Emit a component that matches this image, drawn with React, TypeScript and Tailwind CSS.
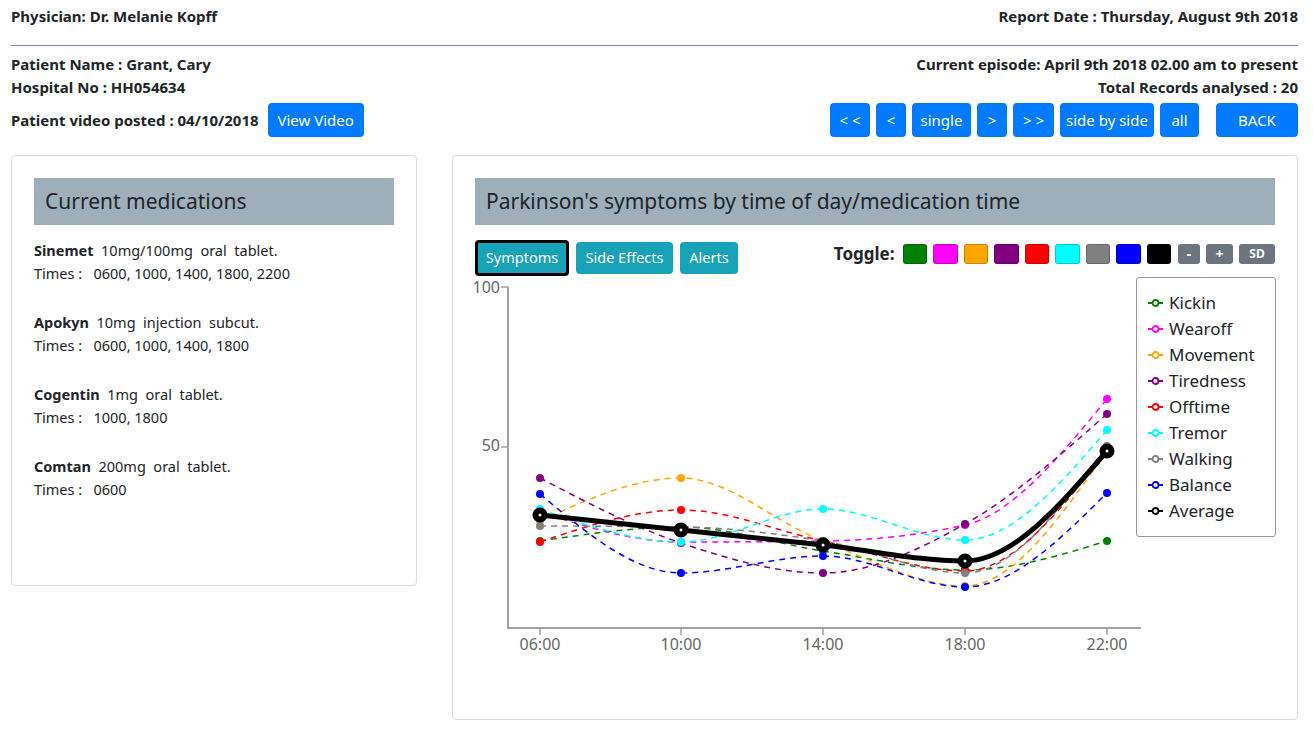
import React from "react";

type Series = { name: string; color: string; values: number[]; average?: boolean };

const xs = [65, 206, 348, 490, 632];
const xLabels = ["06:00", "10:00", "14:00", "18:00", "22:00"];

const series: Series[] = [
  { name: "Kickin", color: "#008000", values: [261, 247, 271, 290, 261] },
  { name: "Wearoff", color: "#ff00ff", values: [232, 262, 261, 245, 119] },
  { name: "Movement", color: "#ffa500", values: [241, 198, 261, 306, 171] },
  { name: "Tiredness", color: "#800080", values: [198, 263, 293, 244, 134] },
  { name: "Offtime", color: "#ff0000", values: [262, 230, 261, 291, 171] },
  { name: "Tremor", color: "#00ffff", values: [229, 262, 229, 260, 150] },
  { name: "Walking", color: "#808080", values: [246, 247, 261, 293, 166] },
  { name: "Balance", color: "#0000ff", values: [214, 293, 276, 307, 213] },
  { name: "Average", color: "#000000", values: [235, 250, 265, 281, 171], average: true },
];

const medications = [
  { name: "Sinemet", detail: "10mg/100mg  oral  tablet.", times: "0600, 1000, 1400, 1800, 2200" },
  { name: "Apokyn", detail: "10mg  injection  subcut.", times: "0600, 1000, 1400, 1800" },
  { name: "Cogentin", detail: "1mg  oral  tablet.", times: "1000, 1800" },
  { name: "Comtan", detail: "200mg  oral  tablet.", times: "0600" },
];

const toggleColors = ["#008000", "#ff00ff", "#ffa500", "#800080", "#ff0000", "#00ffff", "#808080", "#0000ff", "#000000"];

// monotone-x curve, same maths as d3.curveMonotoneX
function monotonePath(px: number[], py: number[]) {
  const n = px.length;
  const sign = (v: number) => (v < 0 ? -1 : 1);
  const t: number[] = new Array(n).fill(0);
  for (let i = 1; i < n - 1; i++) {
    const h0 = px[i] - px[i - 1];
    const h1 = px[i + 1] - px[i];
    const s0 = (py[i] - py[i - 1]) / h0;
    const s1 = (py[i + 1] - py[i]) / h1;
    const p = (s0 * h1 + s1 * h0) / (h0 + h1);
    t[i] = (sign(s0) + sign(s1)) * Math.min(Math.abs(s0), Math.abs(s1), 0.5 * Math.abs(p)) || 0;
  }
  t[0] = (3 * (py[1] - py[0]) / (px[1] - px[0]) - t[1]) / 2;
  t[n - 1] = (3 * (py[n - 1] - py[n - 2]) / (px[n - 1] - px[n - 2]) - t[n - 2]) / 2;
  let d = `M${px[0]},${py[0]}`;
  for (let i = 1; i < n; i++) {
    const dx = (px[i] - px[i - 1]) / 3;
    d += ` C${px[i - 1] + dx},${py[i - 1] + dx * t[i - 1]} ${px[i] - dx},${py[i] - dx * t[i]} ${px[i]},${py[i]}`;
  }
  return d;
}

function NavButton({ label, className = "" }: { label: string; className?: string }) {
  return (
    <button className={`h-[34px] whitespace-nowrap rounded-[4px] bg-[#007bff] text-center text-[15px] font-normal text-white ${className}`}>
      {label}
    </button>
  );
}

function SymptomChart() {
  return (
    <div className="relative mt-[4px] h-[400px]">
      <svg width="800" height="400" className="block overflow-visible">
        <line x1="33" y1="7" x2="33" y2="349" stroke="#a0a0a0" strokeWidth="2" />
        <line x1="32" y1="348" x2="666" y2="348" stroke="#a0a0a0" strokeWidth="2" />
        <line x1="26" y1="7" x2="33" y2="7" stroke="#a0a0a0" strokeWidth="1.5" />
        <line x1="26" y1="167" x2="33" y2="167" stroke="#a0a0a0" strokeWidth="1.5" />
        <text x="25" y="9" textAnchor="end" dominantBaseline="middle" fontSize="16" fill="#666">100</text>
        <text x="25" y="167" textAnchor="end" dominantBaseline="middle" fontSize="16" fill="#666">50</text>
        {xs.map((x, i) => (
          <g key={x}>
            <line x1={x} y1="348" x2={x} y2="355" stroke="#a0a0a0" strokeWidth="1.5" />
            <text x={x} y="366" textAnchor="middle" dominantBaseline="middle" fontSize="16" fill="#666">
              {xLabels[i]}
            </text>
          </g>
        ))}
        {series.map((s) => (
          <g key={s.name}>
            <path
              d={monotonePath(xs, s.values)}
              fill="none"
              stroke={s.color}
              strokeWidth={s.average ? 5 : 1.5}
              strokeDasharray={s.average ? undefined : "6 5"}
            />
            {s.values.map((y, i) =>
              s.average ? (
                <circle key={i} cx={xs[i]} cy={y} r="4.5" fill="#fff" stroke="#000" strokeWidth="6" />
              ) : (
                <circle key={i} cx={xs[i]} cy={y} r="4" fill={s.color} />
              )
            )}
          </g>
        ))}
      </svg>

      <div className="absolute left-[661px] top-[-3px] w-[140px] rounded-[3px] border border-[#999] bg-white px-[11px] py-[12px]">
        {series.map((s) => (
          <div key={s.name} className="flex h-[26px] items-center gap-[6px]">
            <svg width="15" height="10">
              <line x1="0" y1="5" x2="15" y2="5" stroke={s.color} strokeWidth="2" />
              <circle cx="7.5" cy="5" r="3" fill="#fff" stroke={s.color} strokeWidth="1.8" />
            </svg>
            <span className="text-[17px] text-[#212529]">{s.name}</span>
          </div>
        ))}
      </div>
    </div>
  );
}

export default function App() {
  return (
    <div className="min-h-screen bg-white pl-[11px] pr-[15px] pt-[6px] text-[14.5px] text-[#212529] [font-family:'Segoe_UI','Noto_Sans',sans-serif]">
      <div className="flex h-[21px] items-center justify-between text-[15px] font-bold">
        <span>Physician: Dr. Melanie Kopff</span>
        <span>Report Date : Thursday, August 9th 2018</span>
      </div>
      <hr className="mt-[18px] border-0 border-t border-[#7f7fcf]" />

      <div className="mt-[8px] flex justify-between text-[15px] font-bold">
        <div>
          <p className="h-[23px] leading-[21px]">Patient Name : Grant, Cary</p>
          <p className="h-[23px] leading-[21px]">Hospital No : HH054634</p>
          <div className="mt-[3px] flex items-center gap-[9px]">
            <span>Patient video posted : 04/10/2018</span>
            <NavButton label="View Video" className="w-[96px]" />
          </div>
        </div>
        <div className="flex flex-col items-end">
          <p className="h-[23px] leading-[21px]">Current episode: April 9th 2018 02.00 am to present</p>
          <p className="h-[23px] leading-[21px]">Total Records analysed : 20</p>
          <div className="mt-[3px] flex items-center gap-[6px]">
            <NavButton label="< <" className="w-[40px]" />
            <NavButton label="<" className="w-[30px]" />
            <NavButton label="single" className="w-[59px]" />
            <NavButton label=">" className="w-[30px]" />
            <NavButton label="> >" className="w-[41px]" />
            <NavButton label="side by side" className="w-[94px]" />
            <NavButton label="all" className="w-[39px]" />
            <NavButton label="BACK" className="ml-[11px] w-[82px]" />
          </div>
        </div>
      </div>

      <div className="mt-[18px] flex items-start gap-[35px]">
        <section className="h-[431px] w-[406px] shrink-0 rounded-[4px] border border-[#dcdcdc] p-[22px]">
          <h2 className="flex h-[47px] items-center bg-[#9eafba] pl-[11px] text-[21px] font-normal">
            Current medications
          </h2>
          <div className="mt-[14px] flex flex-col gap-[26px]">
            {medications.map((med) => (
              <div key={med.name} className="leading-[23px]">
                <p className="whitespace-pre">
                  <strong>{med.name}</strong>  {med.detail}
                </p>
                <p className="whitespace-pre">Times :   {med.times}</p>
              </div>
            ))}
          </div>
        </section>

        <section className="h-[565px] flex-1 rounded-[4px] border border-[#dcdcdc] p-[22px]">
          <h2 className="flex h-[47px] items-center bg-[#9eafba] pl-[11px] text-[21px] font-normal">
            Parkinson's symptoms by time of day/medication time
          </h2>
          <div className="mt-[15px] flex items-start justify-between">
            <div className="flex items-center gap-[7px]">
              <button className="h-[36px] w-[94px] rounded-[4px] border-[3px] border-black bg-[#17a2b8] text-[14.5px] text-white">
                Symptoms
              </button>
              <button className="h-[32px] w-[97px] rounded-[4px] bg-[#17a2b8] text-[14.5px] text-white">Side Effects</button>
              <button className="h-[32px] w-[58px] rounded-[4px] bg-[#17a2b8] text-[14.5px] text-white">Alerts</button>
            </div>
            <div className="mt-[2px] flex h-[24px] items-center gap-[6px]">
              <span className="mr-[2px] text-[17px] font-bold leading-[24px]">Toggle:</span>
              {toggleColors.map((c) => (
                <span
                  key={c}
                  className="h-[20px] w-[24.5px] rounded-[3px] border border-black/20"
                  style={{ backgroundColor: c }}
                />
              ))}
              <button className="ml-[1px] h-[20px] w-[22px] rounded-[3px] bg-[#6c757d] text-[14px] font-bold leading-none text-white">-</button>
              <button className="h-[20px] w-[27px] rounded-[3px] bg-[#6c757d] text-[14px] font-bold leading-none text-white">+</button>
              <button className="h-[20px] w-[36px] rounded-[3px] bg-[#6c757d] text-[12px] font-bold leading-none text-white">SD</button>
            </div>
          </div>
          <SymptomChart />
        </section>
      </div>
    </div>
  );
}
